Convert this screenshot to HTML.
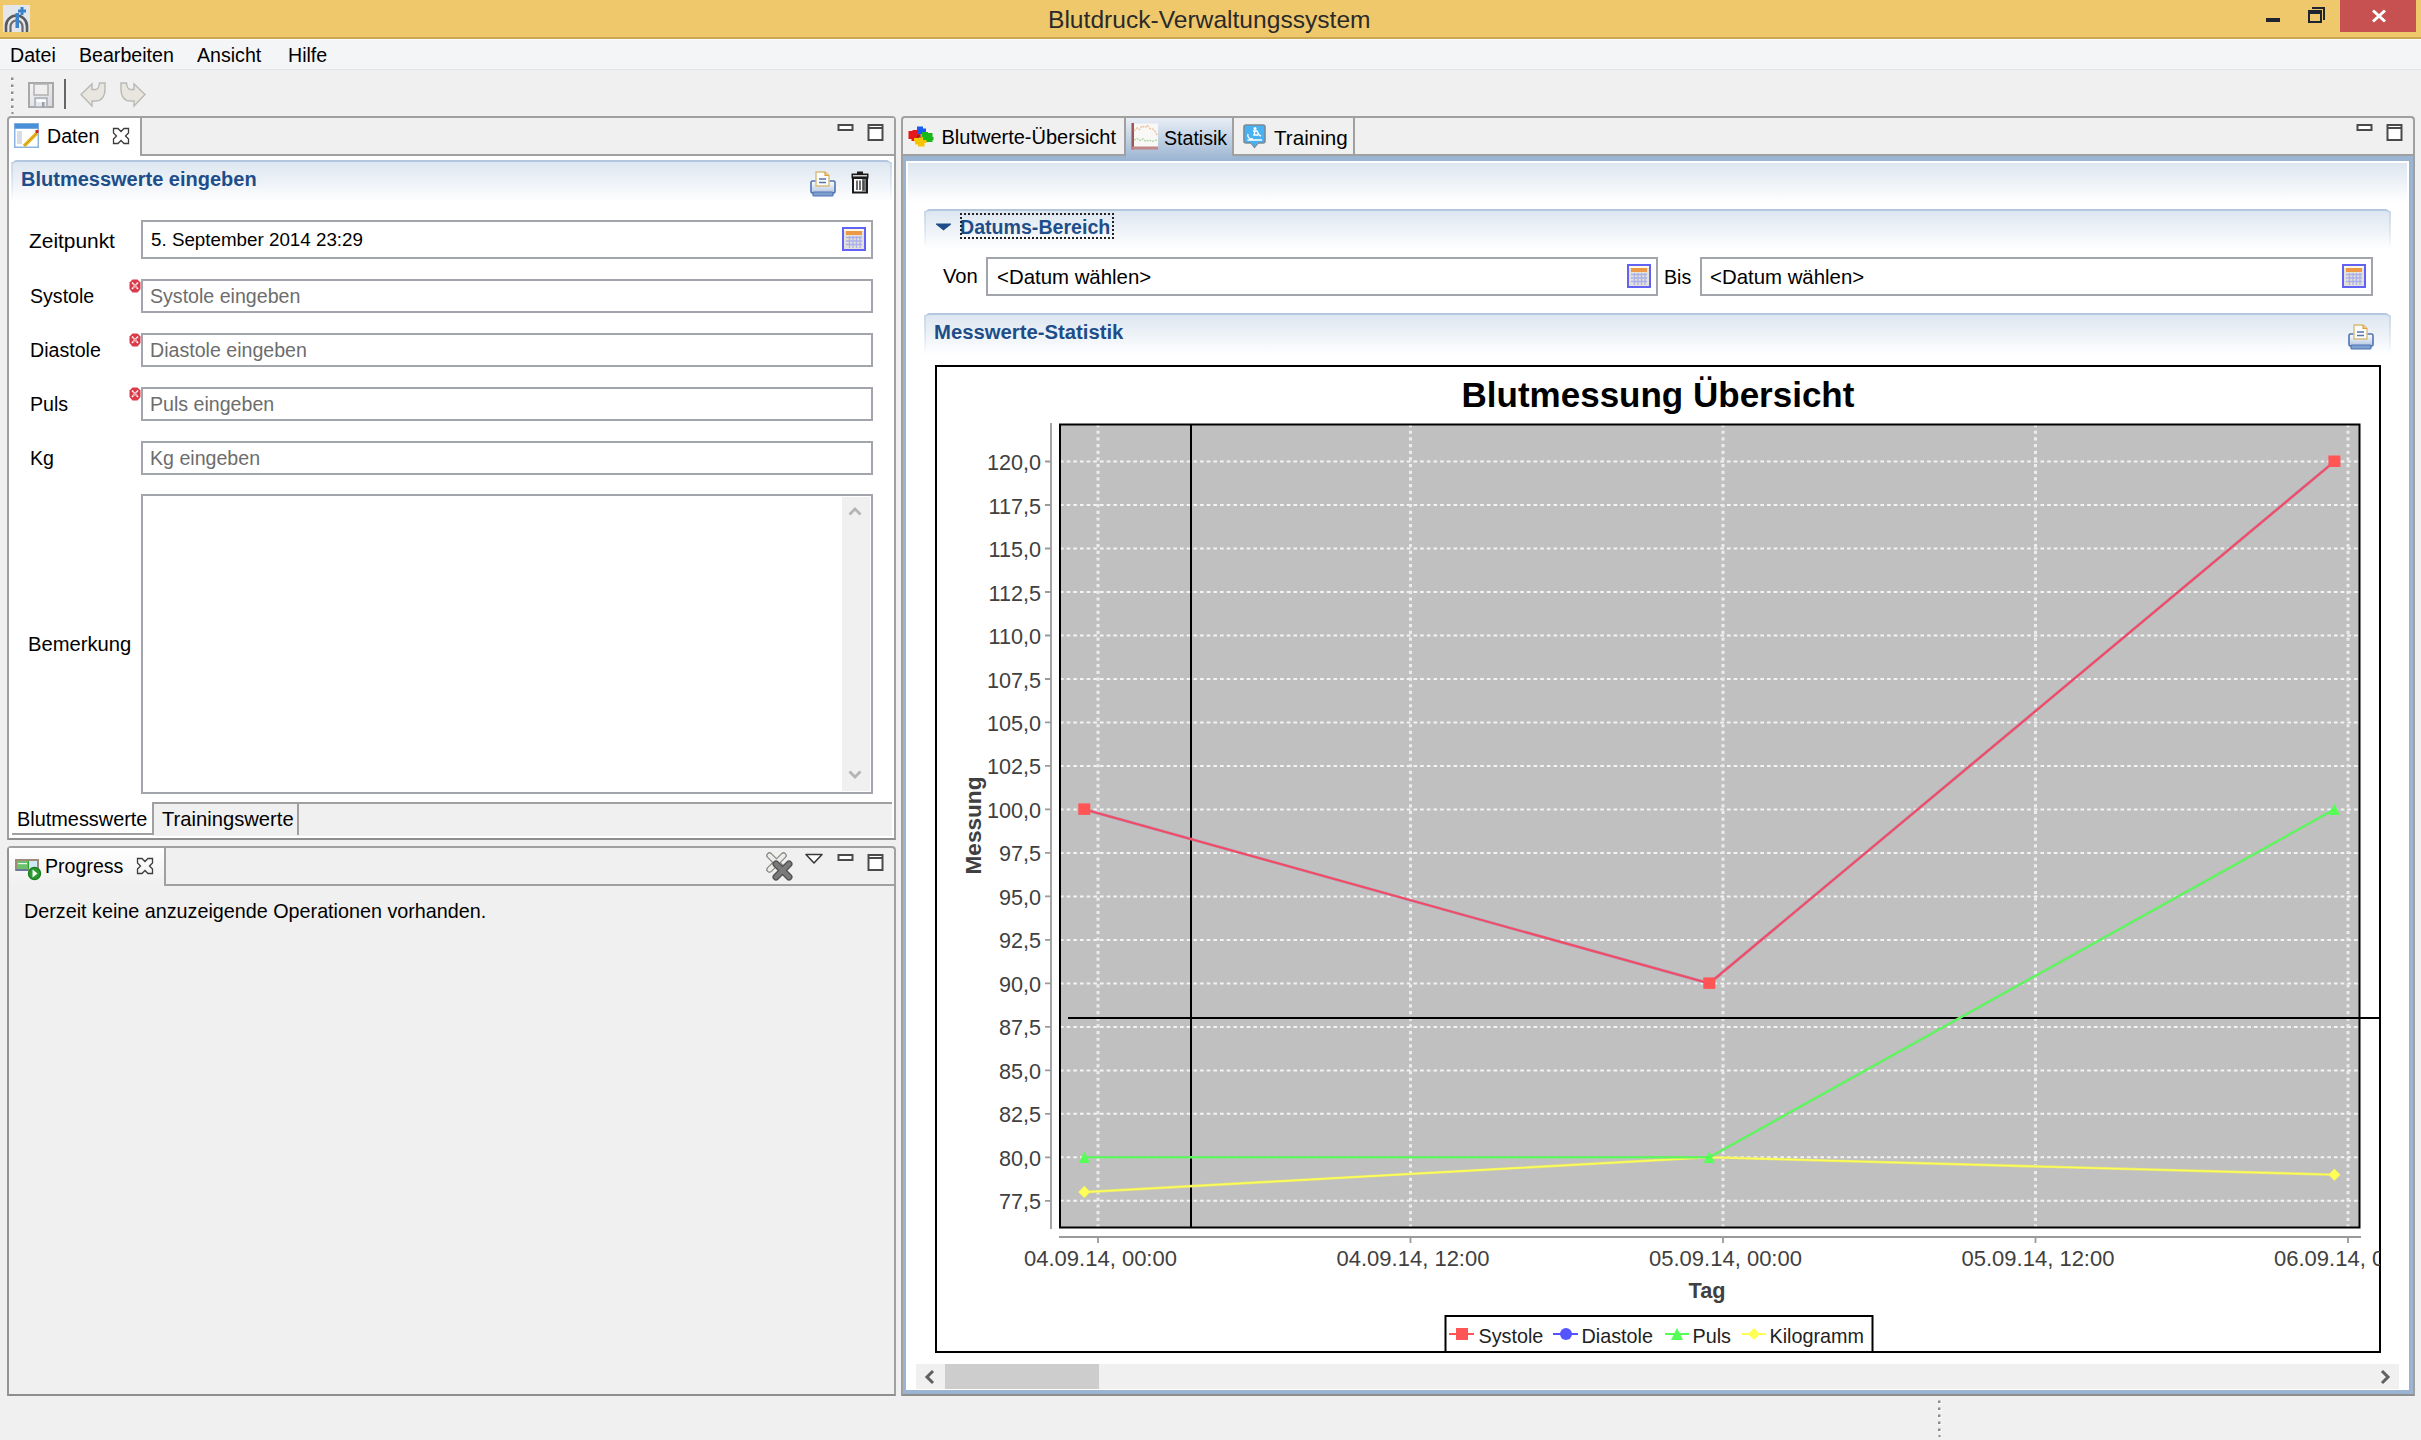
<!DOCTYPE html>
<html><head><meta charset="utf-8">
<style>
*{box-sizing:border-box;margin:0;padding:0}
html,body{width:2421px;height:1440px;overflow:hidden;background:#f0f0f0;font-family:"Liberation Sans",sans-serif;color:#000}
.a{position:absolute}
.t{position:absolute;white-space:nowrap;font-size:19.6px;line-height:1;}
.b{font-weight:bold}
.blue{color:#1d4e89}
.gray{color:#6d6d6d}
.gl{position:absolute;background:#a0a0a0}
.inp{position:absolute;background:#fff;border:2px solid #a2a5ab}
.hdr{position:absolute;border-top:2px solid #b3c8de;border-radius:5px 5px 0 0;background:linear-gradient(#dde6f0,#ffffff)}
.hdr:before{content:"";position:absolute;left:-1px;top:0;width:2px;height:100%;background:linear-gradient(#c8d8e8,rgba(255,255,255,0))}
.hdr:after{content:"";position:absolute;right:-1px;top:0;width:2px;height:100%;background:linear-gradient(#c8d8e8,rgba(255,255,255,0))}
svg{position:absolute;overflow:visible}
</style></head>
<body>


<!-- ============ TITLE BAR ============ -->
<div class="a" style="left:0;top:0;width:2421px;height:39px;background:#f0c86c;border-bottom:2px solid #c9a652"></div>
<div class="t" style="left:1048px;top:8px;font-size:24.6px;color:#2a2a2a">Blutdruck-Verwaltungssystem</div>

<svg style="left:3px;top:5px" width="27" height="27" viewBox="0 0 27 27">
 <rect x="0" y="0" width="27" height="27" fill="#e3e7ec"/>
 <path d="M3,27 V21 A10.5,10.5 0 0 1 24,21 V27" fill="none" stroke="#5a5a5a" stroke-width="2.6"/>
 <path d="M7.5,27 V21.5 A6,6 0 0 1 19.5,21.5 V27" fill="none" stroke="#6a6a6a" stroke-width="2.2"/>
 <rect x="12.5" y="8" width="3.5" height="15" fill="#3b82c9"/>
 <path d="M17.5,2 h3 v2.5 h2.5 v3 h-2.5 v2.5 h-3 v-2.5 h-2.5 v-3 h2.5z" fill="#3b82c9"/>
</svg>
<div class="a" style="left:2266px;top:18px;width:14px;height:4px;background:#1e2430"></div>
<div class="a" style="left:2308px;top:10px;width:14px;height:13px;border:2px solid #1e2430;border-top-width:4px"></div>
<div class="a" style="left:2312px;top:7px;width:13px;height:13px;border-top:2px solid #1e2430;border-right:2px solid #1e2430"></div>
<div class="a" style="left:2340px;top:0;width:76px;height:32px;background:#c75050"></div>
<svg style="left:2372px;top:10px" width="14" height="12" viewBox="0 0 14 12"><path d="M1,0.5 L13,11.5 M13,0.5 L1,11.5" stroke="#fff" stroke-width="3"/></svg>


<!-- ============ MENU ============ -->
<div class="a" style="left:0;top:39px;width:2421px;height:31px;background:#f4f5f7;border-top:1px solid #fcfcfd;border-bottom:1px solid #e2e3e5"></div>
<div class="t" style="left:10px;top:46px">Datei</div>
<div class="t" style="left:79px;top:46px">Bearbeiten</div>
<div class="t" style="left:197px;top:46px">Ansicht</div>
<div class="t" style="left:288px;top:46px">Hilfe</div>

<svg style="left:9px;top:76px" width="6" height="40" viewBox="0 0 6 40">
 <g fill="#fff"><rect x="2.5" y="2.5" width="2.5" height="2.5"/><rect x="2.5" y="9.5" width="2.5" height="2.5"/><rect x="2.5" y="16.5" width="2.5" height="2.5"/><rect x="2.5" y="23.5" width="2.5" height="2.5"/><rect x="2.5" y="30.5" width="2.5" height="2.5"/></g>
 <g fill="#8c8c8c"><rect x="2" y="1.5" width="2.5" height="2.5"/><rect x="2" y="8.5" width="2.5" height="2.5"/><rect x="2" y="15.5" width="2.5" height="2.5"/><rect x="2" y="22.5" width="2.5" height="2.5"/><rect x="2" y="29.5" width="2.5" height="2.5"/><rect x="2.5" y="36" width="2" height="2"/></g>
</svg>
<svg style="left:28px;top:82px" width="26" height="26" viewBox="0 0 26 26">
 <defs><linearGradient id="sg" x1="0" y1="0" x2="1" y2="1"><stop offset="0" stop-color="#f4f4f6"/><stop offset="1" stop-color="#d8dae0"/></linearGradient></defs>
 <rect x="1" y="1" width="24" height="24" fill="url(#sg)" stroke="#a8a8a8" stroke-width="2"/>
 <rect x="6" y="2" width="14" height="11" fill="#f0efed" stroke="#b0b0b0" stroke-width="1.5"/>
 <rect x="7" y="16" width="12" height="9" fill="#e4e6ea" stroke="#a8acb4" stroke-width="1.5"/>
 <rect x="8.5" y="17.5" width="9" height="2.5" fill="#fff"/>
 <rect x="14" y="20" width="2.5" height="5" fill="#9aa0a8"/>
</svg>
<div class="a" style="left:64px;top:79px;width:2px;height:30px;background:#666"></div>
<svg style="left:80px;top:82px" width="27" height="25" viewBox="0 0 27 25">
 <path d="M1,12.5 L12,2 V7.5 H15.5 C18,7.5 19,5.5 19.5,1 H25 V7 C25,15 21,19 15.5,19 H12 V24 Z" fill="#e8e6de" stroke="#b9b9b6" stroke-width="1.4" stroke-linejoin="miter"/>
</svg>
<svg style="left:119px;top:82px" width="27" height="25" viewBox="0 0 27 25">
 <path d="M26,12.5 L15,2 V7.5 H11.5 C9,7.5 8,5.5 7.5,1 H2 V7 C2,15 6,19 11.5,19 H15 V24 Z" fill="#e8e6de" stroke="#b9b9b6" stroke-width="1.4" stroke-linejoin="miter"/>
</svg>


<!-- ============ LEFT VIEW (Daten) ============ -->
<div class="a" style="left:7px;top:116px;width:889px;height:724px;border:2px solid #a0a0a0;border-bottom-color:#8e8e8e;border-radius:4px 4px 0 0;background:#fff"></div>
<!-- tab strip bg right of active tab -->
<div class="a" style="left:142px;top:118px;width:752px;height:37px;background:#f0f0f0"></div>
<div class="gl" style="left:140px;top:118px;width:2px;height:38px"></div>
<div class="gl" style="left:140px;top:154px;width:754px;height:2px"></div>
<div class="t" style="left:47px;top:127px">Daten</div>

<svg style="left:14px;top:123px" width="25" height="25" viewBox="0 0 25 25">
 <rect x="0.75" y="0.75" width="23.5" height="23.5" fill="#fff" stroke="#8cb4e0" stroke-width="1.5"/>
 <rect x="0.75" y="0.75" width="23.5" height="5" fill="#4a90d8"/>
 <rect x="3" y="8" width="5" height="13" fill="#d8dce4"/>
 <path d="M10,23 L23,10" stroke="#e8b820" stroke-width="3.5"/>
 <path d="M10,23 L23,10" stroke="#c89010" stroke-width="1" />
 <rect x="21.5" y="7" width="3" height="3" fill="#e02020"/>
</svg>
<svg style="left:112px;top:127px" width="18" height="18" viewBox="0 0 18 18">
   <path d="M1.5,1.5 H6 L9,4.5 L12,1.5 H16.5 V6 L13.5,9 L16.5,12 V16.5 H12 L9,13.5 L6,16.5 H1.5 V12 L4.5,9 L1.5,6 Z" fill="none" stroke="#3c3c3c" stroke-width="1.3" stroke-linejoin="miter"/>
  </svg>
<svg style="left:837px;top:124px" width="17" height="7" viewBox="0 0 16 7"><rect x="1" y="1" width="14" height="5" fill="#fff" stroke="#4a4a4a" stroke-width="2"/></svg>
<svg style="left:867px;top:124px" width="17" height="17" viewBox="0 0 16 17"><rect x="1" y="1" width="14" height="15" fill="#fff" stroke="#4a4a4a" stroke-width="2"/><path d="M1,4H15" stroke="#4a4a4a" stroke-width="2"/></svg>


<!-- form header -->
<div class="hdr" style="left:12px;top:160px;width:879px;height:42px"></div>
<div class="t b blue" style="left:21px;top:168.5px;font-size:20px">Blutmesswerte eingeben</div>

<!-- fields -->
<div class="t" style="left:29px;top:230.5px;font-size:20.9px">Zeitpunkt</div>
<div class="inp" style="left:141px;top:220px;width:732px;height:39px"></div>
<div class="t" style="left:151px;top:231px;font-size:18.8px">5. September 2014 23:29</div>

<div class="t" style="left:30px;top:287px">Systole</div>
<div class="inp" style="left:141px;top:279px;width:732px;height:34px"></div>
<div class="t gray" style="left:150px;top:287px">Systole eingeben</div>

<div class="t" style="left:30px;top:341px">Diastole</div>
<div class="inp" style="left:141px;top:333px;width:732px;height:34px"></div>
<div class="t gray" style="left:150px;top:341px">Diastole eingeben</div>

<div class="t" style="left:30px;top:395px">Puls</div>
<div class="inp" style="left:141px;top:387px;width:732px;height:34px"></div>
<div class="t gray" style="left:150px;top:395px">Puls eingeben</div>

<div class="t" style="left:30px;top:449px">Kg</div>
<div class="inp" style="left:141px;top:441px;width:732px;height:34px"></div>
<div class="t gray" style="left:150px;top:449px">Kg eingeben</div>

<div class="t" style="left:28px;top:634px;font-size:20.2px">Bemerkung</div>
<div class="inp" style="left:141px;top:494px;width:732px;height:300px"></div>
<div class="a" style="left:842px;top:497px;width:28px;height:294px;background:#f0f0f0"></div>

<svg style="left:810px;top:171px" width="26" height="26" viewBox="0 0 26 26">
   <defs><linearGradient id="pg4" x1="0" y1="0" x2="0" y2="1"><stop offset="0" stop-color="#ffffff"/><stop offset="1" stop-color="#b4c6e2"/></linearGradient></defs>
   <rect x="1" y="10" width="24" height="12" rx="1.5" fill="url(#pg4)" stroke="#4f74b0" stroke-width="1.6"/>
   <rect x="3" y="21" width="20" height="4" rx="1" fill="#7ea0d0" stroke="#4f74b0" stroke-width="1.2"/>
   <path d="M6,1 H15 L19,4.5 V15 H6 Z" fill="#fbfcff" stroke="#d6bc7a" stroke-width="1.4"/>
   <path d="M15,1 V4.5 H19" fill="#f1c880" stroke="#e0a040" stroke-width="1.2"/>
   <path d="M9,8H16 M9,11.5H16" stroke="#5574a8" stroke-width="1.6"/>
  </svg>
<svg style="left:851px;top:171px" width="18" height="22" viewBox="0 0 18 22">
 <rect x="0.5" y="2.5" width="17" height="5" fill="#1a1a1a"/>
 <rect x="2" y="4" width="14" height="1.5" fill="#cfcfcf"/>
 <rect x="6" y="0.5" width="6" height="2.5" fill="#1a1a1a"/>
 <rect x="2" y="7" width="14" height="14.5" fill="#fff" stroke="#1a1a1a" stroke-width="2"/>
 <rect x="11" y="8" width="4" height="12.5" fill="#7a7a7a"/>
 <path d="M6,9.5V19 M9,9.5V19 M12.5,9.5V19" stroke="#4a4a4a" stroke-width="1.6"/>
</svg>
<svg style="left:842px;top:227px" width="24" height="24" viewBox="0 0 24 24">
   <rect x="1" y="1" width="22" height="22" fill="#e4e2d6" stroke="#6262f6" stroke-width="2"/>
   <rect x="2" y="2" width="20" height="2" fill="#fffbe0"/>
   <rect x="4" y="4" width="16" height="4" fill="#ec9a48"/>
   <g stroke="#aab0ec" stroke-width="1.3" fill="none">
    <path d="M4,10.5H20 M4,14H20 M4,17.5H20 M7.5,9V21 M11,9V21 M14.5,9V21 M18,9V21"/>
   </g>
  </svg>
<svg style="left:129px;top:279px" width="12" height="14" viewBox="0 0 12 14">
   <path d="M3.5,0.5 H8.5 L11.5,3.5 V10 L8.5,13.5 H3.5 L0.5,10 V3.5 Z" fill="#da3a4a"/>
   <path d="M3,3.5 L9,10 M9,3.5 L3,10" stroke="#fff" stroke-width="1.6"/>
   <path d="M4,4.5 L8,9 M8,4.5 L4,9" stroke="#e47a84" stroke-width="0.8"/>
  </svg>
<svg style="left:129px;top:333px" width="12" height="14" viewBox="0 0 12 14">
   <path d="M3.5,0.5 H8.5 L11.5,3.5 V10 L8.5,13.5 H3.5 L0.5,10 V3.5 Z" fill="#da3a4a"/>
   <path d="M3,3.5 L9,10 M9,3.5 L3,10" stroke="#fff" stroke-width="1.6"/>
   <path d="M4,4.5 L8,9 M8,4.5 L4,9" stroke="#e47a84" stroke-width="0.8"/>
  </svg>
<svg style="left:129px;top:387px" width="12" height="14" viewBox="0 0 12 14">
   <path d="M3.5,0.5 H8.5 L11.5,3.5 V10 L8.5,13.5 H3.5 L0.5,10 V3.5 Z" fill="#da3a4a"/>
   <path d="M3,3.5 L9,10 M9,3.5 L3,10" stroke="#fff" stroke-width="1.6"/>
   <path d="M4,4.5 L8,9 M8,4.5 L4,9" stroke="#e47a84" stroke-width="0.8"/>
  </svg>
<svg style="left:848px;top:506px" width="14" height="10"><path d="M1.5,8.5 L7,3 L12.5,8.5" stroke="#b4b4b4" stroke-width="2.8" fill="none"/></svg>
<svg style="left:848px;top:770px" width="14" height="10"><path d="M1.5,1.5 L7,7 L12.5,1.5" stroke="#b4b4b4" stroke-width="2.8" fill="none"/></svg>


<!-- bottom tabs -->
<div class="a" style="left:152px;top:802px;width:740px;height:34px;background:#f0f0f0"></div>
<div class="gl" style="left:152px;top:802px;width:740px;height:2px"></div>
<div class="gl" style="left:152px;top:802px;width:2px;height:33px"></div>
<div class="gl" style="left:297px;top:804px;width:2px;height:31px"></div>
<div class="gl" style="left:12px;top:833px;width:140px;height:2px"></div>
<div class="t" style="left:17px;top:809.7px;font-size:19.9px">Blutmesswerte</div>
<div class="t" style="left:162px;top:808.7px;font-size:20.2px">Trainingswerte</div>

<!-- ============ PROGRESS VIEW ============ -->
<div class="a" style="left:7px;top:846px;width:889px;height:550px;border:2px solid #a0a0a0;border-bottom-color:#8e8e8e;border-left-color:#939393;border-radius:4px 4px 0 0;background:#f0f0f0"></div>
<div class="a" style="left:9px;top:848px;width:156px;height:37px;background:linear-gradient(#ffffff,#f0f0f0)"></div>
<div class="gl" style="left:164px;top:848px;width:2px;height:38px"></div>
<div class="gl" style="left:164px;top:884px;width:730px;height:2px"></div>
<div class="t" style="left:45px;top:857px">Progress</div>
<div class="t" style="left:24px;top:902px;font-size:19.75px">Derzeit keine anzuzeigende Operationen vorhanden.</div>

<svg style="left:15px;top:859px" width="26" height="22" viewBox="0 0 26 22">
 <rect x="1" y="1" width="22" height="10" fill="#cfeaf4" stroke="#a08a78" stroke-width="2"/>
 <path d="M1,11H13" stroke="#6a7a98" stroke-width="2"/>
 <rect x="2" y="2" width="10.5" height="8" fill="#6cc06c"/>
 <rect x="3" y="4" width="9" height="1.2" fill="#e8f4e8"/>
 <rect x="12.5" y="2" width="1.5" height="8" fill="#30a030"/>
 <circle cx="19.5" cy="14.5" r="6" fill="#2f9a34" stroke="#178020" stroke-width="1.4"/>
 <path d="M17.5,10.5 L22.5,14.5 L17.5,18.5Z" fill="#f4fff0"/>
</svg>
<svg style="left:136px;top:857px" width="18" height="18" viewBox="0 0 18 18">
   <path d="M1.5,1.5 H6 L9,4.5 L12,1.5 H16.5 V6 L13.5,9 L16.5,12 V16.5 H12 L9,13.5 L6,16.5 H1.5 V12 L4.5,9 L1.5,6 Z" fill="none" stroke="#3c3c3c" stroke-width="1.3" stroke-linejoin="miter"/>
  </svg>
<svg style="left:766px;top:852px" width="28" height="28" viewBox="0 0 28 28">
 <path d="M3.5,3.5 L17.5,17.5 M17.5,3.5 L3.5,17.5" stroke="#8a8a80" stroke-width="6.5" stroke-linecap="round"/>
 <path d="M3.5,3.5 L17.5,17.5 M17.5,3.5 L3.5,17.5" stroke="#ececec" stroke-width="4" stroke-linecap="round"/>
 <path d="M10,12 L23,25 M23,12 L10,25" stroke="#505050" stroke-width="7" stroke-linecap="round"/>
 <path d="M10,12 L23,25 M23,12 L10,25" stroke="#7a7a7a" stroke-width="4.5" stroke-linecap="round"/>
</svg>
<svg style="left:805px;top:853px" width="18" height="11" viewBox="0 0 18 11"><path d="M1,1.5 H17 L9,10Z" fill="#fff" stroke="#3a3a3a" stroke-width="1.6" stroke-linejoin="round"/></svg>
<svg style="left:837px;top:854px" width="17" height="7" viewBox="0 0 16 7"><rect x="1" y="1" width="14" height="5" fill="#fff" stroke="#4a4a4a" stroke-width="2"/></svg>
<svg style="left:867px;top:854px" width="17" height="17" viewBox="0 0 16 17"><rect x="1" y="1" width="14" height="15" fill="#fff" stroke="#4a4a4a" stroke-width="2"/><path d="M1,4H15" stroke="#4a4a4a" stroke-width="2"/></svg>


<!-- ============ RIGHT VIEW ============ -->
<div class="a" style="left:901px;top:116px;width:1514px;height:1280px;border:2px solid #a0a0a0;border-bottom-color:#8e8e8e;border-radius:4px 4px 0 0;background:#f0f0f0"></div>
<!-- blue frame -->
<div class="a" style="left:903px;top:155px;width:1510px;height:1239px;background:#9ab4d2"></div>
<div class="a" style="left:906px;top:161px;width:1503px;height:1229px;background:#fff"></div>
<!-- tabs -->
<div class="a" style="left:1126px;top:118px;width:107px;height:43px;background:linear-gradient(#e8eef5,#9ab4d2)"></div>
<div class="gl" style="left:903px;top:154px;width:223px;height:2px"></div>
<div class="gl" style="left:1124px;top:118px;width:2px;height:38px"></div>
<div class="gl" style="left:1232px;top:118px;width:2px;height:38px"></div>
<div class="gl" style="left:1353px;top:118px;width:2px;height:38px"></div>
<div class="gl" style="left:1232px;top:154px;width:1181px;height:2px"></div>
<div class="t" style="left:941.5px;top:127px;font-size:20px">Blutwerte-Übersicht</div>
<div class="t" style="left:1164px;top:129px">Statisik</div>
<div class="t" style="left:1274px;top:128px;font-size:20.6px">Training</div>

<svg style="left:908px;top:125px" width="26" height="22" viewBox="0 0 26 22">
 <path d="M9,1.5 h6 v2 h3 v5 h-3 v1 h-6z" fill="#1a5af0"/>
 <path d="M0.5,6 h4 v-1 h5 v4 h3 v3 h-1 v3 h-3 v1 h-5 v-2 h-3z" fill="#e41818"/>
 <path d="M14,7 h6 v1 h4.5 v4 h1 v3 h-1 v2 h-7 v-2 h-3.5 v-5 h0z" fill="#18b818"/>
 <path d="M6,13 h5 v-1 h4 v3 h3.5 v3 h-2 v3.5 h-6.5 v-2 h-3 v-3 h-1z" fill="#f6c400"/>
 <path d="M9,10 h5 v3 h-5z" fill="#104010" opacity="0.35"/>
</svg>
<svg style="left:1131px;top:123px" width="28" height="27" viewBox="0 0 28 27">
 <rect x="2" y="0.5" width="25" height="24" fill="#f8f8f6"/>
 <rect x="0.5" y="0" width="2.5" height="26.5" fill="#9c5454"/>
 <rect x="0.5" y="23.5" width="26.5" height="3" fill="#c08888"/>
 <path d="M3,8 L6,5 L8.5,6.5 L11,3 L14,4.5 L16.5,2.5 L19,5.5 L21.5,6 L24,8 L26.5,13" fill="none" stroke="#eec4a4" stroke-width="1.5" stroke-dasharray="2 1"/>
 <path d="M3,17 L6,15.5 L9,17.5 L12,16 L15,18.5 L18,17 L21,18.5 L26,17" fill="none" stroke="#b4d8a8" stroke-width="1.5" stroke-dasharray="2 1"/>
</svg>
<svg style="left:1243px;top:124px" width="23" height="25" viewBox="0 0 23 25">
 <rect x="1" y="1" width="21" height="18" rx="2" fill="#46b2f2" stroke="#7a8a98" stroke-width="1.6"/>
 <path d="M7.5,18.5 L11.5,23.5 L15.5,18.5Z" fill="#46b2f2" stroke="#7a8a98" stroke-width="1.2"/>
 <path d="M8,19H15" stroke="#46b2f2" stroke-width="2"/>
 <circle cx="12" cy="4.5" r="1.5" fill="#fff"/>
 <path d="M10,7 L14,7 L16,11 L18,12 M12,7 L11,11 L15,11 M5,10 C4,13 6,15 10,15 M4.5,16 H19" fill="none" stroke="#fff" stroke-width="1.4"/>
</svg>
<svg style="left:2356px;top:124px" width="17" height="7" viewBox="0 0 16 7"><rect x="1" y="1" width="14" height="5" fill="#fff" stroke="#4a4a4a" stroke-width="2"/></svg>
<svg style="left:2386px;top:124px" width="17" height="17" viewBox="0 0 16 17"><rect x="1" y="1" width="14" height="15" fill="#fff" stroke="#4a4a4a" stroke-width="2"/><path d="M1,4H15" stroke="#4a4a4a" stroke-width="2"/></svg>


<!-- page header gradient -->
<div class="a" style="left:908px;top:163px;width:1499px;height:40px;background:linear-gradient(#dde6f0,#ffffff)"></div>

<!-- Datums-Bereich section -->
<div class="hdr" style="left:925px;top:209px;width:1465px;height:40px"></div>
<svg style="left:936px;top:223px" width="15" height="8"><path d="M0,0.5 L15,0.5 L15,1.5 L7.5,7.5 L0,1.5 Z" fill="#1d4e89"/></svg>
<div class="t b blue" style="left:960px;top:218px">Datums-Bereich</div>
<div class="a" style="left:960px;top:213px;width:154px;height:26px;border:2px dotted #222"></div>

<div class="t" style="left:943px;top:266px;font-size:20.2px">Von</div>
<div class="inp" style="left:986px;top:257px;width:672px;height:39px"></div>
<div class="t" style="left:997px;top:267px;font-size:20.4px">&lt;Datum wählen&gt;</div>
<div class="t" style="left:1664px;top:268px">Bis</div>
<div class="inp" style="left:1700px;top:257px;width:673px;height:39px"></div>
<div class="t" style="left:1710px;top:267px;font-size:20.4px">&lt;Datum wählen&gt;</div>

<!-- Messwerte-Statistik section -->
<div class="hdr" style="left:925px;top:313px;width:1465px;height:42px"></div>
<div class="t b blue" style="left:934px;top:321.5px;font-size:20.3px">Messwerte-Statistik</div>

<svg style="left:1627px;top:264px" width="24" height="24" viewBox="0 0 24 24">
   <rect x="1" y="1" width="22" height="22" fill="#e4e2d6" stroke="#6262f6" stroke-width="2"/>
   <rect x="2" y="2" width="20" height="2" fill="#fffbe0"/>
   <rect x="4" y="4" width="16" height="4" fill="#ec9a48"/>
   <g stroke="#aab0ec" stroke-width="1.3" fill="none">
    <path d="M4,10.5H20 M4,14H20 M4,17.5H20 M7.5,9V21 M11,9V21 M14.5,9V21 M18,9V21"/>
   </g>
  </svg>
<svg style="left:2342px;top:264px" width="24" height="24" viewBox="0 0 24 24">
   <rect x="1" y="1" width="22" height="22" fill="#e4e2d6" stroke="#6262f6" stroke-width="2"/>
   <rect x="2" y="2" width="20" height="2" fill="#fffbe0"/>
   <rect x="4" y="4" width="16" height="4" fill="#ec9a48"/>
   <g stroke="#aab0ec" stroke-width="1.3" fill="none">
    <path d="M4,10.5H20 M4,14H20 M4,17.5H20 M7.5,9V21 M11,9V21 M14.5,9V21 M18,9V21"/>
   </g>
  </svg>
<svg style="left:2348px;top:324px" width="26" height="26" viewBox="0 0 26 26">
   <defs><linearGradient id="pg16" x1="0" y1="0" x2="0" y2="1"><stop offset="0" stop-color="#ffffff"/><stop offset="1" stop-color="#b4c6e2"/></linearGradient></defs>
   <rect x="1" y="10" width="24" height="12" rx="1.5" fill="url(#pg16)" stroke="#4f74b0" stroke-width="1.6"/>
   <rect x="3" y="21" width="20" height="4" rx="1" fill="#7ea0d0" stroke="#4f74b0" stroke-width="1.2"/>
   <path d="M6,1 H15 L19,4.5 V15 H6 Z" fill="#fbfcff" stroke="#d6bc7a" stroke-width="1.4"/>
   <path d="M15,1 V4.5 H19" fill="#f1c880" stroke="#e0a040" stroke-width="1.2"/>
   <path d="M9,8H16 M9,11.5H16" stroke="#5574a8" stroke-width="1.6"/>
  </svg>


<!--CHART-->
<svg style="left:0;top:0;pointer-events:none" width="2421" height="1440" viewBox="0 0 2421 1440">
<defs><clipPath id="cc"><rect x="935" y="365" width="1445" height="988"/></clipPath><clipPath id="pc"><rect x="1060" y="424" width="1300" height="804"/></clipPath></defs>
<rect x="936" y="366" width="1444" height="986" fill="#fff" stroke="#000" stroke-width="2"/>
<text x="1658" y="407" text-anchor="middle" font-family="Liberation Sans" font-weight="bold" font-size="35" fill="#000">Blutmessung Übersicht</text>
<rect x="1060" y="424" width="1300" height="804" fill="#c0c0c0"/>
<path d="M1060,461.5H2360 M1060,505.0H2360 M1060,548.5H2360 M1060,592.0H2360 M1060,635.5H2360 M1060,679.0H2360 M1060,722.4H2360 M1060,765.9H2360 M1060,809.4H2360 M1060,852.9H2360 M1060,896.4H2360 M1060,939.9H2360 M1060,983.4H2360 M1060,1026.9H2360 M1060,1070.4H2360 M1060,1113.8H2360 M1060,1157.3H2360 M1060,1200.8H2360" stroke="#f4f4f4" stroke-width="2" stroke-dasharray="3.6 3.07" fill="none"/>
<path d="M1098,424V1228 M1410.5,424V1228 M1723,424V1228 M2035.5,424V1228 M2348,424V1228" stroke="#ececec" stroke-width="3" stroke-dasharray="3.2 3.47" fill="none"/>
<rect x="1060" y="424.5" width="1299.5" height="803" fill="none" stroke="#000" stroke-width="2"/>
<path d="M1051,423V1229" stroke="#9a9a9a" stroke-width="1.8"/>
<path d="M1045,461.5H1051 M1045,505.0H1051 M1045,548.5H1051 M1045,592.0H1051 M1045,635.5H1051 M1045,679.0H1051 M1045,722.4H1051 M1045,765.9H1051 M1045,809.4H1051 M1045,852.9H1051 M1045,896.4H1051 M1045,939.9H1051 M1045,983.4H1051 M1045,1026.9H1051 M1045,1070.4H1051 M1045,1113.8H1051 M1045,1157.3H1051 M1045,1200.8H1051" stroke="#9a9a9a" stroke-width="1.8"/>
<text x="1041" y="470.0" text-anchor="end" font-family="Liberation Sans" font-size="21.6" fill="#404040">120,0</text>
<text x="1041" y="513.5" text-anchor="end" font-family="Liberation Sans" font-size="21.6" fill="#404040">117,5</text>
<text x="1041" y="557.0" text-anchor="end" font-family="Liberation Sans" font-size="21.6" fill="#404040">115,0</text>
<text x="1041" y="600.5" text-anchor="end" font-family="Liberation Sans" font-size="21.6" fill="#404040">112,5</text>
<text x="1041" y="644.0" text-anchor="end" font-family="Liberation Sans" font-size="21.6" fill="#404040">110,0</text>
<text x="1041" y="687.5" text-anchor="end" font-family="Liberation Sans" font-size="21.6" fill="#404040">107,5</text>
<text x="1041" y="730.9" text-anchor="end" font-family="Liberation Sans" font-size="21.6" fill="#404040">105,0</text>
<text x="1041" y="774.4" text-anchor="end" font-family="Liberation Sans" font-size="21.6" fill="#404040">102,5</text>
<text x="1041" y="817.9" text-anchor="end" font-family="Liberation Sans" font-size="21.6" fill="#404040">100,0</text>
<text x="1041" y="861.4" text-anchor="end" font-family="Liberation Sans" font-size="21.6" fill="#404040">97,5</text>
<text x="1041" y="904.9" text-anchor="end" font-family="Liberation Sans" font-size="21.6" fill="#404040">95,0</text>
<text x="1041" y="948.4" text-anchor="end" font-family="Liberation Sans" font-size="21.6" fill="#404040">92,5</text>
<text x="1041" y="991.9" text-anchor="end" font-family="Liberation Sans" font-size="21.6" fill="#404040">90,0</text>
<text x="1041" y="1035.4" text-anchor="end" font-family="Liberation Sans" font-size="21.6" fill="#404040">87,5</text>
<text x="1041" y="1078.9" text-anchor="end" font-family="Liberation Sans" font-size="21.6" fill="#404040">85,0</text>
<text x="1041" y="1122.3" text-anchor="end" font-family="Liberation Sans" font-size="21.6" fill="#404040">82,5</text>
<text x="1041" y="1165.8" text-anchor="end" font-family="Liberation Sans" font-size="21.6" fill="#404040">80,0</text>
<text x="1041" y="1209.3" text-anchor="end" font-family="Liberation Sans" font-size="21.6" fill="#404040">77,5</text>
<path d="M1059,1237H2361" stroke="#9a9a9a" stroke-width="1.8"/>
<path d="M1098,1237V1243 M1410.5,1237V1243 M1723,1237V1243 M2035.5,1237V1243 M2348,1237V1243" stroke="#9a9a9a" stroke-width="1.8"/>
<g clip-path="url(#cc)">
<text x="1100.5" y="1266" text-anchor="middle" font-family="Liberation Sans" font-size="22" fill="#404040">04.09.14, 00:00</text>
<text x="1413.0" y="1266" text-anchor="middle" font-family="Liberation Sans" font-size="22" fill="#404040">04.09.14, 12:00</text>
<text x="1725.5" y="1266" text-anchor="middle" font-family="Liberation Sans" font-size="22" fill="#404040">05.09.14, 00:00</text>
<text x="2038.0" y="1266" text-anchor="middle" font-family="Liberation Sans" font-size="22" fill="#404040">05.09.14, 12:00</text>
<text x="2350.5" y="1266" text-anchor="middle" font-family="Liberation Sans" font-size="22" fill="#404040">06.09.14, 00:00</text>
</g>
<text x="1707" y="1298" text-anchor="middle" font-family="Liberation Sans" font-weight="bold" font-size="21.7" fill="#404040">Tag</text>
<text transform="translate(980.5,825.5) rotate(-90)" x="0" y="0" text-anchor="middle" font-family="Liberation Sans" font-weight="bold" font-size="22.6" fill="#404040">Messung</text>
<path d="M1191,425V1227" stroke="#000" stroke-width="2"/>
<path d="M1068,1018H2380" stroke="#000" stroke-width="2"/>
<g clip-path="url(#pc)">
<path d="M1084.3,1192.1 L1709.3,1157.3 L2334.4,1174.7" stroke="#e8e870" stroke-width="2.6" fill="none" stroke-linejoin="round"/>
<path d="M1084.3,1192.1 L1709.3,1157.3 L2334.4,1174.7" stroke="#ffff55" stroke-width="1.3" fill="none" stroke-linejoin="round"/>
<path d="M1084.3,1157.3 L1709.3,1157.3 L2334.4,809.4" stroke="#78e078" stroke-width="2.6" fill="none" stroke-linejoin="round"/>
<path d="M1084.3,1157.3 L1709.3,1157.3 L2334.4,809.4" stroke="#55ff55" stroke-width="1.3" fill="none" stroke-linejoin="round"/>
<path d="M1084.3,809.4 L1709.3,983.4 L2334.4,461.5" stroke="#c8709a" stroke-width="2.8" fill="none" stroke-linejoin="round"/>
<path d="M1084.3,809.4 L1709.3,983.4 L2334.4,461.5" stroke="#ff4455" stroke-width="1.4" fill="none" stroke-linejoin="round"/>
<path d="M1084.3,1186.1 L1090.3,1192.1 L1084.3,1198.1 L1078.3,1192.1Z" fill="#ffff55"/>
<path d="M2334.4,1168.7 L2340.4,1174.7 L2334.4,1180.7 L2328.4,1174.7Z" fill="#ffff55"/>
<path d="M1084.3,1151.3 L1089.8,1162.9 L1078.8,1162.9Z" fill="#55ff55"/>
<path d="M1709.3,1151.3 L1714.8,1162.9 L1703.8,1162.9Z" fill="#55ff55"/>
<path d="M2334.4,803.4 L2339.9,815.0 L2328.9,815.0Z" fill="#55ff55"/>
<rect x="1078.3" y="803.4" width="12" height="11.5" fill="#ff5555"/>
<rect x="1703.3" y="977.4" width="12" height="11.5" fill="#ff5555"/>
<rect x="2328.4" y="455.5" width="12" height="11.5" fill="#ff5555"/>
</g>
<rect x="1445.5" y="1316" width="427" height="36" fill="#fff" stroke="#000" stroke-width="2"/>
<path d="M1449,1334H1474" stroke="#ff5555" stroke-width="2"/><rect x="1456" y="1328" width="12" height="12" fill="#ff5555"/>
<path d="M1553,1334H1578" stroke="#5555ff" stroke-width="2"/><circle cx="1566" cy="1334" r="6" fill="#5555ff"/>
<path d="M1665,1334H1689" stroke="#55ff55" stroke-width="2"/><path d="M1677,1328 L1683,1340 L1671,1340Z" fill="#55ff55"/>
<path d="M1742,1334H1766" stroke="#ffff55" stroke-width="2"/><path d="M1754,1328 L1760,1334 L1754,1340 L1748,1334Z" fill="#ffff55"/>
<text x="1478.5" y="1342.5" font-family="Liberation Sans" font-size="19.8" fill="#222">Systole</text>
<text x="1581.5" y="1342.5" font-family="Liberation Sans" font-size="19.8" fill="#222">Diastole</text>
<text x="1692.5" y="1342.5" font-family="Liberation Sans" font-size="19.8" fill="#222">Puls</text>
<text x="1769.5" y="1342.5" font-family="Liberation Sans" font-size="19.8" fill="#222">Kilogramm</text>
</svg>
<!--/CHART-->

<!-- scrollbar -->
<div class="a" style="left:916px;top:1364px;width:1483px;height:25px;background:#f0f0f0"></div>
<div class="a" style="left:945px;top:1364px;width:154px;height:25px;background:#cdcdcd"></div>
<svg style="left:923px;top:1369px" width="14" height="16"><path d="M10,2 L4,8 L10,14" stroke="#606060" stroke-width="3" fill="none"/></svg>
<svg style="left:2378px;top:1369px" width="14" height="16"><path d="M4,2 L10,8 L4,14" stroke="#606060" stroke-width="3" fill="none"/></svg>

<!-- status bar grip -->

<svg style="left:1936px;top:1399px" width="6" height="40" viewBox="0 0 6 40">
 <g fill="#fff"><rect x="3" y="2.5" width="2.5" height="2.5"/><rect x="3" y="9.5" width="2.5" height="2.5"/><rect x="3" y="16.5" width="2.5" height="2.5"/><rect x="3" y="23.5" width="2.5" height="2.5"/><rect x="3" y="30.5" width="2.5" height="2.5"/></g>
 <g fill="#8c8c8c"><rect x="2" y="1.5" width="2.5" height="2.5"/><rect x="2" y="8.5" width="2.5" height="2.5"/><rect x="2" y="15.5" width="2.5" height="2.5"/><rect x="2" y="22.5" width="2.5" height="2.5"/><rect x="2" y="29.5" width="2.5" height="2.5"/><rect x="2.5" y="36" width="2" height="2"/></g>
</svg>

</body></html>
